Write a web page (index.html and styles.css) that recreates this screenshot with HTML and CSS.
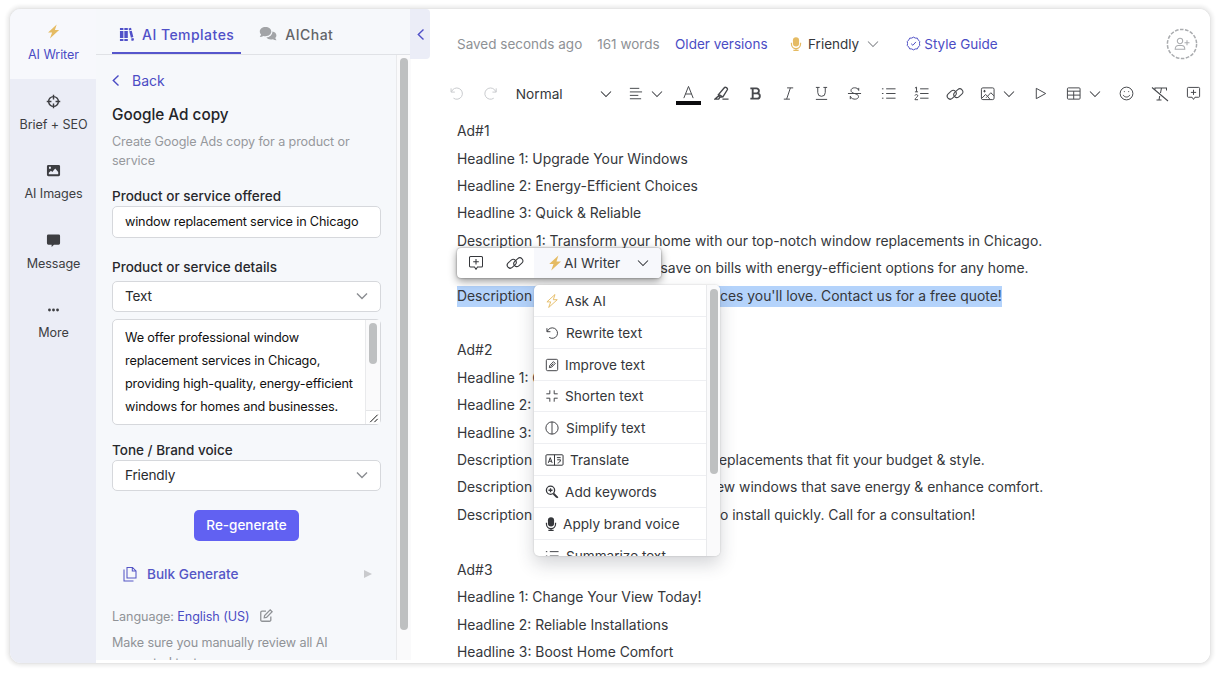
FILE: index.html
```html
<!DOCTYPE html>
<html lang="en">
<head>
    <meta charset="UTF-8">
    <meta name="viewport" content="width=device-width, initial-scale=1.0">
    <title>AI Writer</title>
    <link rel="stylesheet" href="styles.css">
</head>
<body>
    <svg class="sprite" xmlns="http://www.w3.org/2000/svg">
        <symbol id="bolt" viewBox="0 0 16 16"><path d="M11.400 0.600 2.200 9h4.300L4.200 15.400 14 6.500H9.500z"/></symbol>
        <symbol id="chevron" viewBox="0 0 12 12"><path d="M1 3.500 6 8.500 11 3.500"/></symbol>
        <symbol id="chevron-left" viewBox="0 0 12 12"><path d="M8.500 1 3.300 6l5.200 5"/></symbol>
        <symbol id="undo" viewBox="0 0 16 16"><path d="M2.200 2.500v4h4M2.600 6.200A6 6 0 1 1 4.800 13"/></symbol>
        <symbol id="link" viewBox="0 0 18 16"><rect x="0.700" y="5.800" width="10" height="6" rx="3" transform="rotate(-42 5.700 8.800)"/><rect x="7.300" y="4.200" width="10" height="6" rx="3" transform="rotate(-42 12.300 7.200)"/></symbol>
        <symbol id="comment-add" viewBox="0 0 16 16"><path d="M2.500 1.500h11a1 1 0 0 1 1 1v8.500a1 1 0 0 1-1 1H9.500L8 14.300 6.500 12h-4a1 1 0 0 1-1-1V2.500a1 1 0 0 1 1-1zM8 4v5.500M5.200 6.800h5.600"/></symbol>
        <symbol id="mic" viewBox="0 0 16 16"><rect x="4.500" y="0.300" width="7" height="10.500" rx="3.500"/><path d="M2.800 6.500v1.500a5.200 5.200 0 0 0 10.400 0V6.500M8 13v2M5 15.300h6" fill="none" stroke="currentColor" stroke-width="1.400"/></symbol>
        <symbol id="list" viewBox="0 0 16 16"><path d="M5.500 3h10M5.500 8h10M5.500 13h10M1 3h1.600M1 8h1.600M1 13h1.600"/></symbol>
        <symbol id="edit" viewBox="0 0 16 16"><path d="M8 2.500H3.500a1.500 1.500 0 0 0-1.500 1.500v8.500A1.500 1.500 0 0 0 3.500 14H12a1.500 1.500 0 0 0 1.500-1.500V8.500M6 10l.4-2.600L12.800 1l2.200 2.200-6.400 6.400z"/></symbol>
    </svg>

    <div class="window">
        <nav class="rail">
            <a class="rail-item active">
                <svg class="fill gold"><use href="#bolt"/></svg>
                <span>AI Writer</span>
            </a>
            <a class="rail-item">
                <svg class="line heavy" viewBox="0 0 16 16"><circle cx="8" cy="8" r="5.200"/><path d="M8 .8v5M8 10.200v5M.8 8h5M10.200 8h5"/></svg>
                <span>Brief + SEO</span>
            </a>
            <a class="rail-item">
                <svg class="fill" viewBox="0 0 16 16"><path fill-rule="evenodd" d="M2.500 2h11A1.500 1.500 0 0 1 15 3.500v9a1.500 1.500 0 0 1-1.500 1.500h-11A1.500 1.500 0 0 1 1 12.500v-9A1.500 1.500 0 0 1 2.500 2zM3 12h10V9.500L9.800 5.800 6.700 9.500 5.300 8.200 3 10.500zM3.200 4v2h2V4z"/></svg>
                <span>AI Images</span>
            </a>
            <a class="rail-item">
                <svg class="fill" viewBox="0 0 16 16"><path d="M2.500 1.500h11A1.500 1.500 0 0 1 15 3v8a1.500 1.500 0 0 1-1.500 1.500H8.500L6 15v-2.500H2.500A1.500 1.500 0 0 1 1 11V3a1.500 1.500 0 0 1 1.500-1.500z"/></svg>
                <span>Message</span>
            </a>
            <a class="rail-item">
                <svg class="fill" viewBox="0 0 16 16"><circle cx="3.700" cy="8.500" r="1.500"/><circle cx="8" cy="8.500" r="1.500"/><circle cx="12.300" cy="8.500" r="1.500"/></svg>
                <span>More</span>
            </a>
        </nav>

        <aside class="panel">
            <div class="tabs">
                <div class="tab active">
                    <svg class="fill" viewBox="0 0 16 16"><path d="M1 1h3.700v2.200H1zM1 4.200h3.700v7.600H1zM1 12.800h3.700V15H1zM5.700 1h3.700v2.200H5.700zM5.700 4.200h3.700v7.600H5.700zM5.700 12.800h3.700V15H5.700zM10.200 1.500l2.600-.7.600 2.200-2.600.7zM11 4.600l2.600-.7 1.700 6.800-2.600.7zM12.900 12.300l2.600-.6.500 2.500-2.500.700z"/></svg>
                    AI Templates
                </div>
                <div class="tab">
                    <svg class="fill chat" viewBox="0 0 18 16"><path d="M6.500 1C3.200 1 .8 3 .8 5.500c0 1.200.5 2.200 1.300 3L.8 11c1.500 0 2.700-.4 3.600-1 .7.200 1.400.300 2.100.300 3.300 0 5.800-2 5.800-4.700S9.800 1 6.500 1z"/><path d="M13.400 5.600c.1 3.400-2.700 5.700-6 6 .9 1.200 2.500 1.900 4.300 1.900.8 0 1.500-.1 2.100-.300 1 .6 2.200 1 3.700 1l-1.300-2.300c.7-.7 1.200-1.500 1.200-2.500 0-1.900-1.700-3.500-4-3.800z"/></svg>
                    AIChat
                </div>
            </div>
            <div class="panel-body">
                <div class="form">
                    <a class="back"><svg class="line"><use href="#chevron-left"/></svg>Back</a>
                    <h2>Google Ad copy</h2>
                    <p class="hint">Create Google Ads copy for a product or service</p>

                    <label>Product or service offered</label>
                    <div class="field">window replacement service in Chicago</div>

                    <label class="second">Product or service details</label>
                    <div class="field select">Text<svg class="line"><use href="#chevron"/></svg></div>
                    <div class="textarea">
                        <p>We offer professional window<br>replacement services in Chicago,<br>providing high-quality, energy-efficient<br>windows for homes and businesses.</p>
                        <div class="textarea-side">
                            <div class="thumb"></div>
                            <svg class="line grip" viewBox="0 0 14 14"><path d="M4 12 12 4M8.500 12 12 8.500"/></svg>
                        </div>
                    </div>

                    <label class="third">Tone / Brand voice</label>
                    <div class="field select">Friendly<svg class="line"><use href="#chevron"/></svg></div>

                    <button class="generate">Re-generate</button>

                    <div class="bulk">
                        <svg class="line" viewBox="0 0 16 16"><path d="M5 1.500h5.500L14 5v7H5zM10.300 1.500V5H14M2 3.500V15h9.500"/></svg>
                        <span>Bulk Generate</span>
                        <i class="arrow"></i>
                    </div>

                    <p class="language">Language: <a>English (US)</a><svg class="line"><use href="#edit"/></svg></p>
                    <p class="note">Make sure you manually review all AI<br>generated texts.</p>
                </div>
                <div class="track"><div class="thumb"></div></div>
            </div>
        </aside>

        <main class="editor">
            <div class="collapse"><svg class="line"><use href="#chevron-left"/></svg></div>
            <header class="status">
                <span class="saved">Saved seconds ago</span>
                <span class="words">161 words</span>
                <a class="versions">Older versions</a>
                <span class="voice"><svg class="fill gold"><use href="#mic"/></svg>Friendly<svg class="line caret"><use href="#chevron"/></svg></span>
                <a class="guide"><svg class="line" viewBox="0 0 16 16"><path d="M8 1.200l1.900 1 2.200.1 1 2 1.500 1.500-.2 2.200.2 2.200-1.500 1.500-1 2-2.200.100-1.900 1-1.900-1-2.200-.1-1-2-1.500-1.500.2-2.200-.2-2.200 1.500-1.500 1-2 2.200-.1zM5.500 8.200l1.800 1.700 3.300-3.600"/></svg>Style Guide</a>
                <span class="avatar">
                    <svg class="ring" viewBox="0 0 32 32"><circle cx="16" cy="16" r="14.600"/></svg>
                    <svg class="line person" viewBox="0 0 16 14"><circle cx="6" cy="4" r="2.700"/><path d="M1.200 12.300c0-2.500 1.500-3.800 3.300-3.800h3c1.800 0 3.300 1.300 3.300 3.800zM13 3.300v5M10.500 5.800h5"/></svg>
                </span>
            </header>

            <div class="toolbar">
                <span class="tool faded"><svg class="line"><use href="#undo"/></svg></span>
                <span class="tool faded flip"><svg class="line"><use href="#undo"/></svg></span>
                <span class="format">Normal<svg class="line caret"><use href="#chevron"/></svg></span>
                <span class="tool wide"><svg class="line" viewBox="0 0 16 16"><path d="M2 2.500h10M2 6.300h13M2 10h9M2 13.600h12"/></svg><svg class="line caret"><use href="#chevron"/></svg></span>
                <span class="tool color"><svg class="line" viewBox="0 0 16 16"><path d="M3 14 8 1.500 13 14M4.700 9.600h6.600"/></svg></span>
                <span class="tool"><svg class="line heavy" viewBox="0 0 16 16"><path d="M4.500 9.500 11 1.800c1-1.200 4 .5 3.200 2.200L9.500 11.500l-3.500.5zM5 9l4.200 2.500M5 10.500l-4 3.500h4l1-1.500M9 14h6.500"/></svg></span>
                <span class="tool"><svg class="line bold" viewBox="0 0 16 16"><path d="M2.500 2.500h6.500a2.600 2.600 0 0 1 0 5.300H5M9 7.800h.8a2.800 2.800 0 0 1 0 5.700H2.500M5 2.500v11"/></svg></span>
                <span class="tool"><svg class="line" viewBox="0 0 16 16"><path d="M6.500 2H13M3 14h6.500M10 2 6 14"/></svg></span>
                <span class="tool"><svg class="line" viewBox="0 0 16 16"><path d="M2 1.500h4M10 1.500h4M4 1.500V7a4 4 0 0 0 8 0V1.500M2 14.300h12"/></svg></span>
                <span class="tool"><svg class="line" viewBox="0 0 16 16"><path d="M12.500 5V2M12.300 4.500C11.600 1 4.300 1 4.300 4.700c0 2 1.700 2.700 3.700 3.300s4.300 1.300 4.300 3.300C12.300 15 4.500 15 3.700 11M3.500 14v-3.200M1 8h14"/></svg></span>
                <span class="tool"><svg class="line"><use href="#list"/></svg></span>
                <span class="tool"><svg class="line" viewBox="0 0 16 16"><path d="M6.500 3h9M6.500 8h9M6.500 13h9M1 2.200l1.700-1v5M1 6.200h3.300M1 10.200c.3-1.500 3-1.500 3 .2 0 1.300-2.700 2.200-3 4.200h3.300"/></svg></span>
                <span class="tool"><svg class="line link"><use href="#link"/></svg></span>
                <span class="tool wide"><svg class="line" viewBox="0 0 16 16"><rect x="1.500" y="2" width="13.500" height="12.500" rx="1.500"/><path d="M2 13l4-4 2 2 3.500-3.800L15 10.500M3.500 5.500h2.600M4.800 4.200v2.600M6.500 12.500 8 11l2.500 3"/></svg><svg class="line caret"><use href="#chevron"/></svg></span>
                <span class="tool"><svg class="line" viewBox="0 0 16 16"><path d="M3.500 2.500v11L13.500 8z"/></svg></span>
                <span class="tool wide"><svg class="line" viewBox="0 0 16 16"><rect x="1.500" y="2" width="13.500" height="12" rx="1"/><path d="M1.500 5.500H15M1.500 9.700H15M8.200 5.500V14"/></svg><svg class="line caret"><use href="#chevron"/></svg></span>
                <span class="tool"><svg class="line" viewBox="0 0 16 16"><circle cx="8" cy="8" r="6.800"/><path d="M4.500 9.500c1.200 3 5.800 3 7 0M5.700 5.500v1M10.300 5.500v1"/></svg></span>
                <span class="tool"><svg class="line clear" viewBox="0 0 18 16"><path d="M1 1.500 17 15M4 4V2h11.500v2.500M10.500 2 9.500 7M8.700 10 8 14M5.500 14h5"/></svg></span>
                <span class="tool"><svg class="line"><use href="#comment-add"/></svg></span>
            </div>

            <div class="document">
                <p>Ad#1</p>
                <p>Headline 1: Upgrade Your Windows</p>
                <p>Headline 2: Energy-Efficient Choices</p>
                <p>Headline 3: Quick &amp; Reliable</p>
                <p>Description 1: Transform your home with our top-notch window replacements in Chicago.</p>
                <p><span class="start bills">Description 2: Stay cozy and</span>save on bills with energy-efficient options for any home.</p>
                <p><mark><span class="start services">Description 3: Reliable servi</span>ces you'll love. Contact us for a free quote!</mark></p>
                <p class="blank"></p>
                <p>Ad#2</p>
                <p>Headline 1: Get New Windows</p>
                <p>Headline 2: Save on Energy</p>
                <p>Headline 3: Local Experts</p>
                <p><span class="start replace">Description 1: Window r</span>eplacements that fit your budget &amp; style.</p>
                <p><span class="start renew">Description 2: Choose n</span>ew windows that save energy &amp; enhance comfort.</p>
                <p><span class="start install">Description 3: Our pros t</span>o install quickly. Call for a consultation!</p>
                <p class="blank"></p>
                <p>Ad#3</p>
                <p>Headline 1: Change Your View Today!</p>
                <p>Headline 2: Reliable Installations</p>
                <p>Headline 3: Boost Home Comfort</p>
            </div>

            <div class="bubble">
                <span class="bubble-tool"><svg class="line"><use href="#comment-add"/></svg></span>
                <span class="bubble-tool"><svg class="line link"><use href="#link"/></svg></span>
                <span class="bubble-writer"><svg class="fill gold"><use href="#bolt"/></svg>AI Writer<svg class="line caret"><use href="#chevron"/></svg></span>
            </div>

            <div class="menu">
                <ul>
                    <li><svg class="line gold"><use href="#bolt"/></svg>Ask AI</li>
                    <li class="wider"><svg class="line"><use href="#undo"/></svg>Rewrite text</li>
                    <li><svg class="line" viewBox="0 0 16 16"><rect x="1.500" y="1.500" width="13" height="13" rx="1.500"/><path d="M5 11l.5-2.700L9.700 4.200l2 2-4 4.200zM6.500 9.500 9.500 6.500"/></svg>Improve text</li>
                    <li><svg class="line" viewBox="0 0 16 16"><path d="M5.500 1.500v4h-4M10.500 1.500v4h4M5.500 14.500v-4h-4M10.500 14.500v-4h4"/></svg>Shorten text</li>
                    <li class="wider"><svg class="line" viewBox="0 0 16 16"><circle cx="8" cy="8" r="7"/><path d="M8 1v14"/></svg>Simplify text</li>
                    <li class="translate"><svg class="line" viewBox="0 0 20 14"><rect x="1" y="1.500" width="18" height="11" rx="1"/><path d="M10 1.500v11M3.500 10 5.500 4.500 7.500 10M4.300 8.300h2.400M12.500 4.500h4M12.800 6.800h3.500c0 2-1.500 3-3 3.500"/></svg>Translate</li>
                    <li><svg class="line heavy" viewBox="0 0 16 16"><circle cx="6.300" cy="6" r="4.700"/><path d="M9.800 9.500l5 5M9.500 10.300l4 4M4 6h4.600M6.300 3.800v4.400"/></svg>Add keywords</li>
                    <li class="brand"><svg class="fill"><use href="#mic"/></svg>Apply brand voice</li>
                    <li class="wider"><svg class="line"><use href="#list"/></svg>Summarize text</li>
                </ul>
                <div class="track"><div class="thumb"></div></div>
            </div>
        </main>
    </div>
</body>
</html>
```
FILE: styles.css
```css
* {
    box-sizing: border-box;
}
body {
    margin: 0;
    height: 673px;
    padding: 9px 10px 10px;
    background: #fff;
    color: #35373b;
    font-family: Inter, "Liberation Sans", sans-serif;
    font-size: 14px;
    overflow: hidden;
}
p, h2, ul {
    margin: 0;
    padding: 0;
}
svg {
    width: 16px;
    height: 16px;
    flex: none;
}
.sprite {
    display: none;
}
.line {
    fill: none;
    stroke: currentColor;
    stroke-width: 1.05;
}
.heavy {
    stroke-width: 1.5;
}
.bold {
    stroke-width: 2;
}
.fill {
    fill: currentColor;
}
.gold {
    color: #e5bb63;
}
.window {
    display: flex;
    height: 654px;
    border-radius: 11px;
    overflow: hidden;
    background: #fff;
    box-shadow: 0 0 2px 1px #e2e2e2, 0 0 3px 4px #f3f3f3;
}

/* left rail */
.rail {
    flex: none;
    width: 86px;
    background: #ebedf6;
    font-size: 12.6px;
    letter-spacing: -0.08px;
}
.rail-item {
    display: flex;
    flex-direction: column;
    align-items: center;
    height: 69.5px;
    padding: 15px 0 0 1px;
    gap: 8px;
    line-height: 16px;
    color: #3d3e42;
}
.rail-item svg {
    width: 15px;
    height: 15px;
}
.rail-item.active {
    background: #f7f8fc;
    color: #4b4cc4;
}
.rail-item.active svg {
    width: 17px;
}

/* template panel */
.panel {
    flex: none;
    width: 315px;
    height: 651px;
    background: #f6f8fb;
}
.tabs {
    display: flex;
    height: 46px;
    padding-left: 16px;
    gap: 17px;
    border-bottom: 1px solid #e0e2e6;
    font-size: 14px;
    font-weight: 500;
    letter-spacing: 0.47px;
    color: #626468;
}
.tab {
    display: flex;
    align-items: center;
    gap: 8px;
    height: 45px;
    padding: 7px 7px 0 7px;
    border-bottom: 2px solid transparent;
}
.tab svg {
    width: 15px;
    height: 15px;
}
.tab .chat {
    width: 18px;
    height: 16px;
    margin-left: -6px;
    color: #a2a4a7;
}
.tab.active {
    color: #5050c8;
    border-color: #5656cc;
}
.panel-body {
    display: flex;
    height: 605px;
    overflow: hidden;
}
.form {
    flex: none;
    width: 300px;
    padding: 15px 15px 0 16px;
}
.back {
    display: flex;
    align-items: center;
    gap: 10px;
    height: 20px;
    margin-left: -2px;
    color: #4b4cc4;
}
.back svg, .collapse svg {
    width: 12px;
    height: 13px;
    stroke-width: 1.4;
}
h2 {
    margin-top: 14px;
    line-height: 21px;
    font-size: 15.3px;
    font-weight: 500;
    color: #242529;
}
.hint {
    margin-top: 6.5px;
    line-height: 19.5px;
    font-size: 12.6px;
    letter-spacing: -0.1px;
    color: #96999d;
}
label {
    display: block;
    height: 20px;
    margin-top: 15px;
    line-height: 20px;
    font-size: 13.5px;
    font-weight: 500;
    color: #27282c;
}
.field {
    display: flex;
    align-items: center;
    width: 269px;
    height: 32px;
    padding: 0 12px;
    border: 1px solid #d6d8dc;
    border-radius: 5px;
    background: #fff;
    font-size: 12.7px;
    letter-spacing: -0.17px;
    white-space: nowrap;
    color: #111;
}
.select {
    justify-content: space-between;
    height: 31px;
    padding-bottom: 1px;
    font-size: 13.6px;
    color: #292a2e;
}
.select svg {
    width: 12px;
    height: 12px;
    stroke-width: 1.4;
    color: #8a8d91;
}
label.second {
    margin-top: 19px;
    margin-bottom: 4px;
}
.textarea {
    display: flex;
    justify-content: space-between;
    width: 269px;
    height: 106px;
    margin-top: 7px;
    padding: 6px 0 0 12px;
    border: 1px solid #d6d8dc;
    border-radius: 5px;
    background: #fff;
    font-size: 12.7px;
    letter-spacing: -0.15px;
    line-height: 23.2px;
    color: #111;
    white-space: nowrap;
}
.textarea-side {
    display: flex;
    flex: none;
    flex-direction: column;
    justify-content: space-between;
    align-items: center;
    width: 15px;
    margin-top: -6px;
    border-left: 1px solid #e9eaec;
    background: #fafafb;
}
.textarea-side .thumb {
    height: 41px;
    margin: 3px 0 0;
}
.thumb {
    width: 8px;
    border-radius: 4px;
    background: #bec0c1;
}
.grip {
    width: 14px;
    height: 14px;
    border-top: 1px solid #e5e6e8;
    border-radius: 0 0 4px 0;
    background: #fff;
}
label.third {
    margin-top: 15px;
    margin-bottom: 0;
}
.generate {
    display: block;
    width: 105px;
    height: 31px;
    margin: 19px 0 0 82px;
    padding: 0;
    border: none;
    border-radius: 5px;
    background: #6161f2;
    color: #fff;
    font: 500 13.5px Inter, sans-serif;
}
.bulk {
    display: flex;
    align-items: center;
    gap: 9px;
    height: 20px;
    margin-top: 23px;
    padding: 0 9px 0 10px;
    font-size: 13.6px;
    font-weight: 500;
    color: #5556c6;
}
.arrow {
    margin-left: auto;
    border-left: 8px solid #c9cacd;
    border-top: 4px solid transparent;
    border-bottom: 4px solid transparent;
}
.language {
    display: flex;
    align-items: center;
    height: 20px;
    margin-top: 22.5px;
    font-size: 12.6px;
    letter-spacing: -0.08px;
    color: #909397;
    white-space: pre;
}
.language a {
    color: #4b4cc4;
}
.language svg {
    width: 14px;
    height: 14px;
    margin-left: 10px;
    stroke-width: 1.5;
}
.note {
    margin-top: 7px;
    line-height: 20px;
    font-size: 12.6px;
    letter-spacing: -0.1px;
    color: #909397;
}
.track {
    display: flex;
    flex: none;
    justify-content: center;
    width: 15px;
    border-left: 1px solid #e9eaec;
    background: #fafafb;
}
.track .thumb {
    height: 572px;
    margin-top: 3px;
}

/* editor */
.editor {
    position: relative;
    flex: 1;
    min-width: 0;
    background: #fff;
    white-space: nowrap;
}
.collapse {
    position: absolute;
    left: -1px;
    top: 0;
    display: flex;
    align-items: center;
    justify-content: center;
    width: 20px;
    height: 50px;
    padding-left: 1px;
    border-radius: 0 4px 4px 0;
    background: #ebedf7;
    color: #5050c8;
}
.status {
    display: flex;
    align-items: center;
    height: 69px;
    padding: 0 12px 0 46px;
    font-size: 13.5px;
    color: #8e9195;
}
.words {
    margin-left: 15px;
}
.status a {
    color: #4b4cc4;
}
.versions {
    margin-left: 15.5px;
}
.voice {
    display: flex;
    align-items: center;
    gap: 5px;
    margin-left: 21.5px;
    color: #35373b;
}
.voice .fill {
    width: 14px;
    height: 14px;
}
.voice .caret {
    margin-left: 3px;
    color: #888b8f;
}
.caret {
    width: 12px;
    height: 12px;
}
.guide {
    display: flex;
    align-items: center;
    gap: 3px;
    margin-left: 27px;
}
.guide svg {
    width: 15px;
    height: 15px;
}
.avatar {
    display: grid;
    place-items: center;
    margin-left: auto;
    color: #a9abae;
}
.avatar svg {
    grid-area: 1 / 1;
}
.ring {
    width: 32px;
    height: 32px;
    fill: none;
    stroke: #aaacaf;
    stroke-width: 1.5;
    stroke-dasharray: 3.6 1.5;
}
.person {
    height: 14px;
}
.toolbar {
    display: flex;
    height: 31px;
    padding-left: 29.3px;
    color: #46484c;
}
.tool {
    display: flex;
    flex: none;
    align-items: center;
    justify-content: center;
    width: 33.25px;
}
.tool svg {
    width: 15px;
    height: 15px;
}
.tool .link, .tool .clear {
    width: 18px;
    height: 16px;
}
.tool.wide {
    justify-content: flex-start;
    width: 52.8px;
    padding-left: 8.5px;
    gap: 8px;
}
.tool .caret {
    width: 12px;
    height: 12px;
}
.faded {
    color: #c8cacd;
}
.flip {
    transform: scaleX(-1);
}
.format {
    display: flex;
    flex: none;
    align-items: center;
    justify-content: space-between;
    width: 112.5px;
    padding: 0 7px 0 9px;
    color: #35373b;
    font-size: 13.7px;
}
.tool.color {
    flex-direction: column;
    padding-top: 2px;
}
.color::after {
    content: "";
    width: 25px;
    height: 4px;
    margin-top: 1px;
    background: #0c0c0e;
}
.document {
    padding: 9.2px 0 0 46px;
    font-size: 13.9px;
}
.document p {
    height: 27.42px;
    line-height: 27.42px;
}
mark {
    display: inline-block;
    height: 21px;
    line-height: 21px;
    background: #b4d3fb;
    color: inherit;
}
.start {
    display: inline-block;
    height: 21px;
    line-height: 21px;
    vertical-align: top;
    overflow: hidden;
}
.document p > .start {
    height: 27.42px;
    line-height: 27.42px;
}
.bills {
    width: 203.5px;
}
.services {
    width: 263px;
}
.replace {
    width: 262px;
}
.renew {
    width: 259px;
}
.install {
    width: 263px;
}

/* selection bubble and its menu float over the text */
.bubble {
    position: absolute;
    left: 46px;
    top: 239px;
    display: flex;
    width: 204px;
    height: 30px;
    border-radius: 4px;
    overflow: hidden;
    background: #fff;
    box-shadow: 0 0 2px rgba(0, 0, 0, 0.45), 0 3px 8px rgba(0, 0, 0, 0.42);
}
.bubble-tool {
    display: flex;
    align-items: center;
    justify-content: center;
    width: 38.5px;
}
.bubble-tool .link {
    width: 18px;
}
.bubble-writer {
    display: flex;
    align-items: center;
    flex: 1;
    padding: 0 12px 0 13px;
    background: #f7f8fc;
    font-size: 13.7px;
}
.bubble-writer .fill {
    width: 16px;
    margin-right: 1px;
}
.bubble-writer .caret {
    margin-left: auto;
}
.menu {
    position: absolute;
    left: 123px;
    top: 276px;
    display: flex;
    width: 186px;
    height: 271px;
    border-radius: 5px;
    overflow: hidden;
    background: #fff;
    box-shadow: 0 0 2px rgba(0, 0, 0, 0.2), 0 8px 18px rgba(40, 45, 60, 0.2);
}
.menu ul {
    flex: 1;
    list-style: none;
}
.menu li {
    display: flex;
    align-items: center;
    height: 31.85px;
    padding: 1px 0 0 11px;
    gap: 6px;
    border-bottom: 1px solid #eeeff2;
    font-size: 13.6px;
}
.menu li svg {
    width: 14px;
    height: 14px;
}
.menu .wider {
    gap: 7px;
}
.menu .translate svg {
    width: 19px;
}
.menu .brand {
    padding-left: 10px;
    gap: 5px;
}
.menu .track {
    width: 14px;
}
.menu .thumb {
    height: 185px;
    margin-top: 4px;
}
```
